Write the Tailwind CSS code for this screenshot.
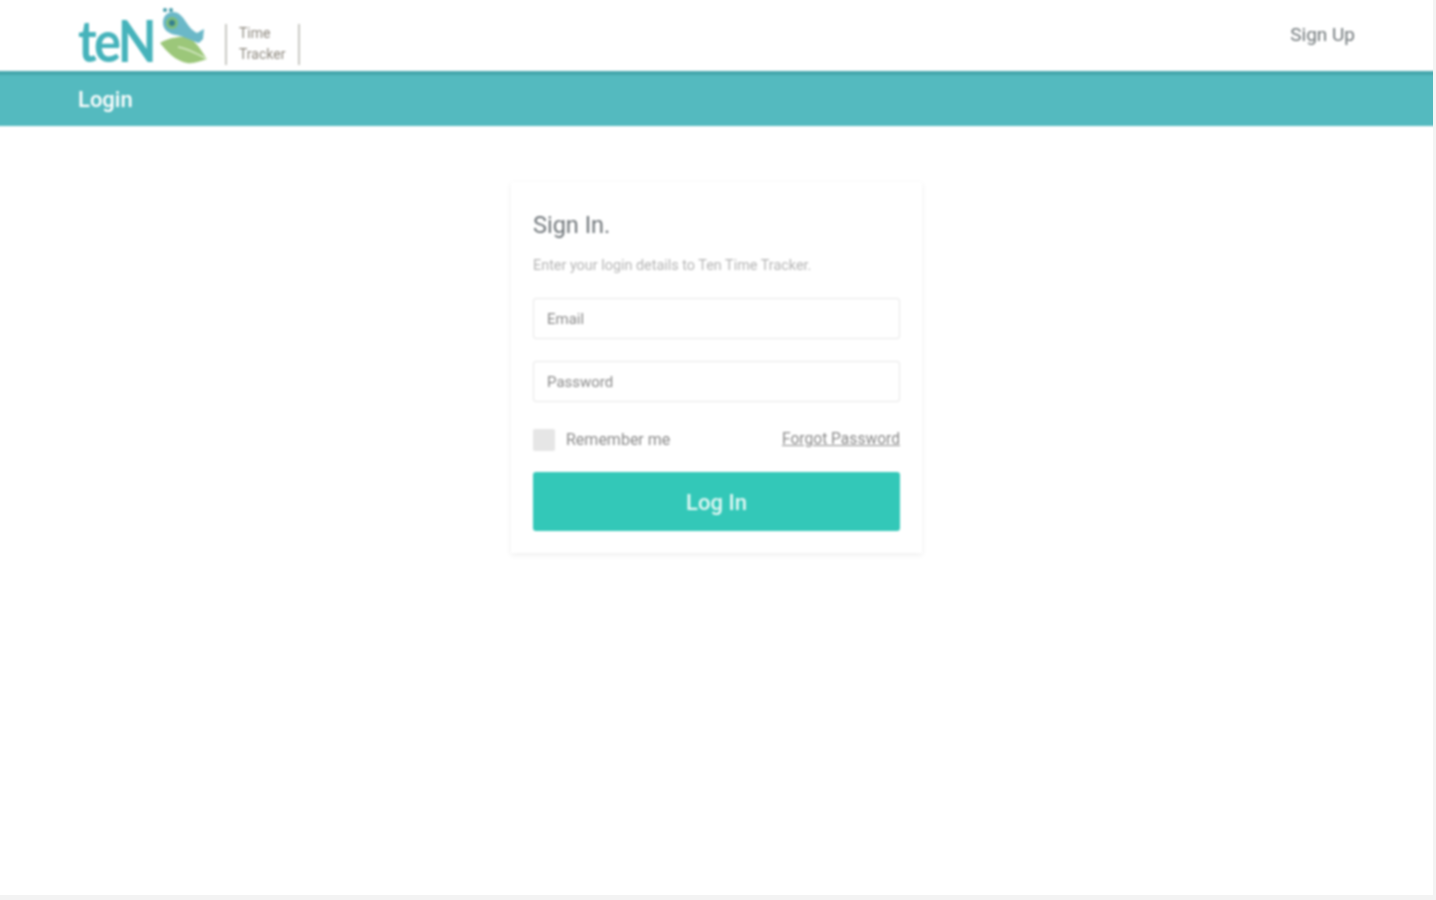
<!DOCTYPE html>
<html lang="en">
<head>
  <meta charset="UTF-8" />
  <meta name="viewport" content="width=device-width, initial-scale=1.0" />
  <title>Login - Ten Time Tracker</title>
  <script src="https://cdn.jsdelivr.net/npm/@tailwindcss/browser@4"></script>
</head>
<body class="bg-[#f3f3f3] font-['Roboto',sans-serif]">
  <div class="w-[1433px] h-[895px] bg-white overflow-hidden">
    <!-- blur layer runs past the page edge so the bars don't fade at x=0 -->
    <div class="-ml-[6px] -mt-[6px] w-[1445px] pt-[6px] blur-[1px]">

      <!-- Top header -->
      <header class="h-[71px] flex items-start justify-between px-[84px]">
        <div class="flex items-start">
          <div class="w-[76px] h-[71px] pt-[11px]">
            <span class="inline-block origin-left scale-x-[0.87] whitespace-nowrap font-['Lato',sans-serif] font-bold text-[#46b3bb] text-[58px] leading-[58px] tracking-[-3px]">teN</span>
          </div>
          <svg class="w-[54px] h-[60px] mt-[6px]" viewBox="0 0 54 60" fill="none">
            <path d="M6 37 C14 32 25 30 33 31 C42 34 48 46 53 53 C46 55 40 58 33 57 C22 55 13 46 6 37Z" fill="#9cc77a"/>
            <path d="M24 41 C32 42 40 46 53 53" stroke="#d8ebc8" stroke-width="1.5"/>
            <path d="M9 17 C9 10 13 6 19 6 C25 6 29 11 32 16 C35 21 39 25 43 27 L50 23 L49 33 L45 37 C38 35 32 31 22 29 C14 28 9 23 9 17Z" fill="#6bb8c8"/>
            <circle cx="18" cy="17" r="6" fill="#7dbd7c"/>
            <circle cx="18" cy="17" r="3" fill="#35808f"/>
            <circle cx="11" cy="4" r="2" fill="#3f9aa8"/>
            <circle cx="17" cy="4" r="2" fill="#3f9aa8"/>
          </svg>
          <div class="mt-[24px] ml-[17px] w-[75px] h-[41px] border-x-2 border-[#c9c9c4] pl-[12px] flex flex-col justify-between text-[14px] leading-[20px] text-[#8f8a80]">
            <span class="-mt-[1px]">Time</span>
            <span class="mb-[1px]">Tracker</span>
          </div>
        </div>
        <a href="#" class="text-[19px] leading-[70px] text-[#6f7679]">Sign Up</a>
      </header>

      <!-- Title bar -->
      <div class="h-[55px] bg-[#54babf] border-t-[4px] border-[#45a7ac] flex items-center pl-[84px] pb-[2px] text-[22px] font-medium text-white">
        Login
      </div>

      <!-- Sign in card -->
      <main class="flex justify-center pt-[56px] pb-[360px]">
        <form class="w-[411px] h-[371px] bg-white shadow-[0_2px_6px_rgba(0,0,0,0.07)] px-[22px] pt-[27px]">
          <h1 class="text-[23.5px] leading-[32px] text-[#70767a]">Sign In.</h1>
          <p class="mt-[15px] text-[14.4px] leading-[20px] text-[#b5b5b5]">Enter your login details to Ten Time Tracker.</p>

          <input type="text" placeholder="Email" class="mt-[22px] block w-full h-[41px] px-[13px] rounded-[3px] border border-[#e6e6e6] bg-white text-[15px] placeholder:text-[#8a8a8a]" />
          <input type="password" placeholder="Password" class="mt-[22px] block w-full h-[41px] px-[13px] rounded-[3px] border border-[#e6e6e6] bg-white text-[15px] placeholder:text-[#8a8a8a]" />

          <div class="mt-[26px] flex items-center justify-between">
            <label class="flex items-center gap-[11px] text-[16px] text-[#8a8a8a]">
              <span class="w-[22px] h-[22px] rounded-[2px] bg-[#e6e6e6]"></span>
              Remember me
            </label>
            <a href="#" class="text-[15.6px] text-[#8a8a8a] underline">Forgot Password</a>
          </div>

          <button type="button" class="mt-[20px] block w-full h-[59px] rounded-[3px] bg-[#33c8b8] pt-[1px] text-[22px] font-medium text-[#e4f8f5]">Log In</button>
        </form>
      </main>
    </div>
  </div>
</body>
</html>
